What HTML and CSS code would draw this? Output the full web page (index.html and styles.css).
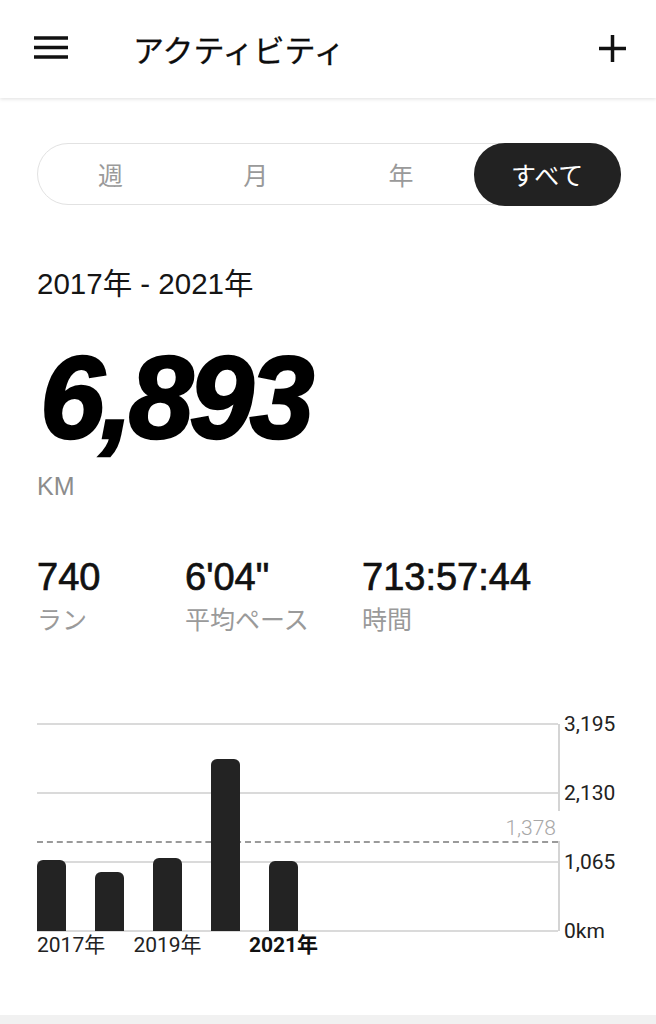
FILE: index.html
```html
<!DOCTYPE html>
<html lang="ja">
<head>
<meta charset="utf-8">
<title>アクティビティ</title>
<link rel="stylesheet" href="styles.css">
</head>
<body>
<header class="appbar">
  <svg class="menu" width="34" height="24" viewBox="0 0 34 24" aria-hidden="true">
    <path d="M0 2h34M0 11.5h34M0 21h34" stroke="#111" stroke-width="3.5" fill="none"/>
  </svg>
  <h1 class="title">アクティビティ</h1>
  <svg class="plus" width="27" height="27" viewBox="0 0 27 27" aria-hidden="true">
    <path d="M13.5 0v27M0 13.5h27" stroke="#111" stroke-width="3.5" fill="none"/>
  </svg>
</header>

<main class="content">
  <div class="segments">
    <div class="seg">週</div>
    <div class="seg">月</div>
    <div class="seg">年</div>
    <div class="seg active">すべて</div>
  </div>

  <div class="range">2017年 - 2021年</div>
  <div class="total">6,893</div>
  <div class="unit">KM</div>

  <div class="stats">
    <div class="stat"><div class="val">740</div><div class="lbl">ラン</div></div>
    <div class="stat"><div class="val">6'04"</div><div class="lbl">平均ペース</div></div>
    <div class="stat"><div class="val">713:57:44</div><div class="lbl">時間</div></div>
  </div>

  <div class="chart">
    <div class="chart-main">
      <div class="plot">
        <div class="grid g0"></div>
        <div class="grid g1"></div>
        <div class="grid g2"></div>
        <div class="grid g3"></div>
        <div class="avg-line"></div>
        <div class="avg"><span class="avg-label">1,378</span></div>
        <div class="bars">
          <div class="bar" style="height:71px"></div>
          <div class="bar" style="height:59px"></div>
          <div class="bar" style="height:73px"></div>
          <div class="bar" style="height:172px"></div>
          <div class="bar" style="height:70px"></div>
        </div>
      </div>
      <div class="xaxis">
        <div class="xl first">2017年</div>
        <div class="xl"></div>
        <div class="xl">2019年</div>
        <div class="xl"></div>
        <div class="xl current">2021年</div>
      </div>
    </div>
    <div class="yaxis">
      <div class="yl">3,195</div>
      <div class="yl">2,130</div>
      <div class="yl">1,065</div>
      <div class="yl">0km</div>
    </div>
  </div>
</main>
<div class="next-card"></div>
</body>
</html>
```

FILE: styles.css
```css
* { box-sizing: border-box; }

html, body {
  margin: 0;
  padding: 0;
  background: #fff;
}

body {
  width: 656px;
  height: 1024px;
  overflow: hidden;
  font-family: "Liberation Sans", "Noto Sans CJK JP", sans-serif;
  color: #111;
}

.appbar {
  height: 98px;
  display: flex;
  align-items: center;
  padding: 0 30px 0 34px;
  box-shadow: 0 1px 4px rgba(0, 0, 0, 0.13);
  position: relative;
  z-index: 2;
}

.menu {
  display: block;
  margin-bottom: 3px;
}

.title {
  margin: 0 0 0 65px;
  font-family: "Noto Sans CJK JP", sans-serif;
  font-weight: 400;
  font-size: 31px;
  line-height: 40px;
  color: #0d0d0d;
  -webkit-text-stroke: 0.3px #0d0d0d;
  flex: 1;
}

.plus {
  display: block;
  margin-bottom: 1px;
}

.content {
  padding: 45px 36px 0 37px;
}

.segments {
  height: 62px;
  border: 1.5px solid #e2e2e2;
  border-radius: 31px;
  display: grid;
  grid-template-columns: repeat(4, 1fr);
}

.seg {
  display: flex;
  align-items: center;
  justify-content: center;
  font-family: "Noto Sans CJK JP", sans-serif;
  font-size: 25px;
  color: #9a9a9a;
  border-radius: 31px;
}

.seg.active {
  background: #222;
  color: #fff;
  margin: -1.5px -1.5px -1.5px 0;
}

.range {
  margin-top: 61px;
  font-size: 29.5px;
  line-height: 36px;
  color: #151515;
}

.total {
  margin-top: 38px;
  font-size: 116px;
  line-height: 116px;
  font-weight: 700;
  font-style: italic;
  letter-spacing: -4px;
  -webkit-text-stroke: 2.5px #000;
  color: #000;
  padding-left: 3px;
}

.unit {
  margin-top: 15px;
  font-size: 25px;
  line-height: 30px;
  color: #8c8c8c;
}

.stats {
  margin-top: 54px;
  display: grid;
  grid-template-columns: 148px 177px 1fr;
}

.val {
  font-size: 38px;
  line-height: 44px;
  color: #111;
  -webkit-text-stroke: 0.7px #111;
}

.lbl {
  margin-top: 4px;
  font-family: "Noto Sans CJK JP", sans-serif;
  font-size: 25px;
  line-height: 30px;
  color: #9a9a9a;
}

.chart {
  margin-top: 91px;
  display: flex;
  align-items: flex-start;
  font-family: Roboto, "Noto Sans CJK JP", sans-serif;
}

.chart-main {
  width: 523px;
}

.plot {
  position: relative;
  height: 207px;
  border-right: 2px solid #d4d4d4;
}

.grid {
  position: absolute;
  left: 0;
  right: 0;
  height: 2px;
  background: #dadada;
}
.g0 { top: -1px; }
.g1 { top: 68px; }
.g2 { top: 137px; }
.g3 { top: 206px; }

.avg-line {
  position: absolute;
  left: 0;
  right: 0;
  top: 117px;
  border-top: 2px dashed #9a9a9a;
}

.avg {
  position: absolute;
  right: -3px;
  top: 87px;
  height: 30px;
  background: #fff;
  display: flex;
  align-items: flex-end;
}

.avg-label {
  font-size: 21px;
  font-weight: 300;
  line-height: 26px;
  color: #a8a8a8;
  padding: 0 5px 0 2px;
}

.bars {
  position: relative;
  z-index: 1;
  height: 100%;
  display: flex;
  align-items: flex-end;
  gap: 29px;
}

.bar {
  width: 29px;
  background: #232323;
  border-radius: 6px 6px 0 0;
}

.xaxis {
  margin-top: 2px;
  display: flex;
  gap: 29px;
}

.xl {
  width: 29px;
  height: 24px;
  display: flex;
  justify-content: center;
  white-space: nowrap;
  font-size: 21px;
  line-height: 24px;
  color: #222;
}

.xl.first {
  justify-content: flex-start;
}

.xl.current {
  font-weight: 700;
  color: #111;
}

.yaxis {
  margin: -12px 0 0 4px;
  height: 231px;
  display: flex;
  flex-direction: column;
  justify-content: space-between;
}

.yl {
  font-size: 21px;
  line-height: 24px;
  color: #222;
}

.next-card {
  margin-top: 58px;
  height: 20px;
  background: #f1f1f1;
}
```
